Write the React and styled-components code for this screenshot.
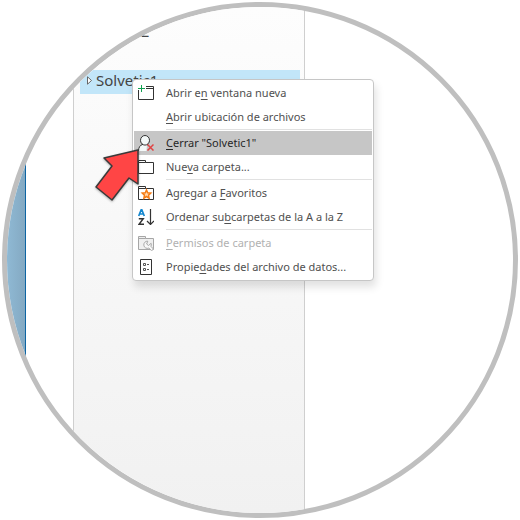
import React from "react";
import styled, { createGlobalStyle } from "styled-components";

const GlobalStyle = createGlobalStyle`
  * {
    box-sizing: border-box;
  }

  body {
    margin: 0;
    background: #fff;
    font-family: "Noto Sans", "Open Sans", sans-serif;
    color: #444;
  }
`;

const Page = styled.main`
  padding: 2px;
`;

const Lens = styled.div`
  display: grid;
  grid-template-columns: 19px 47px 232px 1fr;
  width: 100%;
  aspect-ratio: 1;
  border: 5px solid #bfbfbf;
  border-radius: 50%;
  background: #fff;
  overflow: hidden;
`;

const Rail = styled.div`
  background: linear-gradient(90deg, #8fb9d4, #84a9c2);
  border-right: 1px solid #0e65a3;
`;

const FolderPane = styled.nav`
  grid-column: 3;
  display: flex;
  flex-direction: column;
  gap: 25px;
  padding: 14px 4px 0 6px;
  border-left: 1px solid #cfcfcf;
  border-right: 1px solid #cfcfcf;
  background: linear-gradient(#fdfdfd, #f1f1f1);
`;

const Folder = styled.button`
  display: flex;
  align-items: center;
  gap: 4px;
  height: 24px;
  padding: 0 7px 4px;
  border: 0;
  background: ${({ $selected }) => ($selected ? "#c2e6f9" : "transparent")};
  color: #444;
  font: inherit;
  font-size: 15px;
  line-height: 20px;
  text-align: left;
`;

const FolderItem = styled.div`
  position: relative;
  display: grid;
`;

const Menu = styled.div`
  position: absolute;
  top: 9px;
  left: 52px;
  width: 242px;
  padding: 1px;
  border: 1px solid #c6c6c6;
  border-radius: 4px;
  background: #fff;
  box-shadow: 2px 6px 9px rgba(0, 0, 0, 0.12);
`;

const MenuItem = styled.button`
  display: flex;
  align-items: center;
  gap: 12px;
  width: 100%;
  height: 24px;
  padding: 0 4px;
  border: 0;
  background: ${({ $active }) => ($active ? "#c6c6c6" : "transparent")};
  color: ${({ $active }) => ($active ? "#262626" : "#505050")};
  font: inherit;
  font-size: 11px;
  line-height: 16px;
  white-space: nowrap;
  text-align: left;

  &:disabled {
    color: #b1b1b1;
  }

  u {
    text-underline-offset: 2px;
  }
`;

const Separator = styled.hr`
  height: 2px;
  margin: 0 0 0 32px;
  border: 0;
  border-top: 1px solid #e1e1e1;
`;

const Icon = styled.svg`
  flex: none;
  width: 16px;
  height: 16px;
  fill: none;
  stroke: #333;
`;

const Pointer = styled.svg`
  position: absolute;
  top: 76px;
  left: 12px;
  width: 50px;
  height: 58px;
  filter: drop-shadow(0 1px 1px rgba(0, 0, 0, 0.3));
`;

const NewWindowIcon = () => (
  <Icon viewBox="0 0 16 16">
    <path d="M.5 5v9.500h15v-13H8M8 3.500h7.500" />
    <path d="M0 3.500h7M3.500 0v7" stroke="#10a050" />
  </Icon>
);

const CloseIcon = () => (
  <Icon viewBox="0 0 16 16">
    <path
      d="M.5 16C.5 12.500 2 10 5 9.300a4.500 4.800 0 1 1 4 0L8.500 16z"
      fill="#f4f9f9"
      stroke="none"
    />
    <path d="M.5 16C.5 12.500 2 10 5 9.300M9 9.300l1 .7" />
    <ellipse cx="7" cy="5.300" rx="4.500" ry="4.800" />
    <path d="M9.500 9.500l6 6M15.500 9.500l-6 6" stroke="#e04343" strokeWidth="1.500" />
  </Icon>
);

const FolderIcon = () => (
  <Icon viewBox="0 0 16 16">
    <path d="M.5 1.500h7v2h8v11H.5zM.5 3.500h7" />
  </Icon>
);

const FavoriteIcon = () => (
  <Icon viewBox="0 0 16 16">
    <path d="M.5 1.500h7v2h8v11H.5zM.5 3.500h7" />
    <path
      d="M8.500 5l1.200 2.800 3 .3-2.200 2 .6 3-2.600-1.600-2.600 1.600.6-3-2.200-2 3-.3z"
      fill="#ffd9b0"
      stroke="#f57c14"
      strokeWidth="1.500"
    />
  </Icon>
);

const SortIcon = () => (
  <Icon viewBox="0 0 16 16">
    <path d="M.7 7L3.200.8h.6L6.300 7M1.600 5h3.800" stroke="#1487cf" strokeWidth="1.700" />
    <path d="M.8 9.700h4.400L1 15.300h5" strokeWidth="1.500" />
    <path d="M12.500 0v15.500M9 12l3.500 3.500L16 12" strokeWidth="1.200" />
  </Icon>
);

const PermissionsIcon = () => (
  <Icon viewBox="0 0 16 16">
    <path d="M.5 1.500h7v2h8v11H.5zM.5 3.500h7" fill="#efefef" stroke="#a6a6a6" />
    <path
      d="M9.800 6.200a3.600 3.600 0 1 0 1 6.900L13.600 15.700l1.900-1.600-2.600-2.800a3.600 3.600 0 0 0 .2-3L10.500 10.500 8.600 9z"
      fill="#f8f8f8"
      stroke="#a6a6a6"
      strokeLinejoin="round"
    />
  </Icon>
);

const PropertiesIcon = () => (
  <Icon viewBox="0 0 16 16">
    <path d="M2.500.5h11v15h-11z" />
    <path d="M5.500 4.500h2v2h-2zM5.500 9.500h2v2h-2zM9 5.500h2M9 10.500h2" stroke="#555" />
  </Icon>
);

const App = () => (
  <Page>
    <GlobalStyle />
    <Lens>
      <Rail />
      <FolderPane>
        <Folder>Solvetic2</Folder>
        <FolderItem>
          <Folder $selected>
            <svg width="5" height="9" viewBox="0 0 5 9">
              <path d="M.5.8v7.400l4-3.700z" fill="#fff" stroke="#666" />
            </svg>
            Solvetic1
          </Folder>
          <Menu role="menu">
            <MenuItem role="menuitem">
              <NewWindowIcon />
              <span>
                Abrir e<u>n</u> ventana nueva
              </span>
            </MenuItem>
            <MenuItem role="menuitem">
              <Icon />
              <span>
                <u>A</u>brir ubicación de archivos
              </span>
            </MenuItem>
            <Separator />
            <MenuItem role="menuitem" $active>
              <CloseIcon />
              <span>
                <u>C</u>errar "Solvetic1"
              </span>
            </MenuItem>
            <MenuItem role="menuitem">
              <FolderIcon />
              <span>
                Nue<u>v</u>a carpeta...
              </span>
            </MenuItem>
            <Separator />
            <MenuItem role="menuitem">
              <FavoriteIcon />
              <span>
                Agregar a <u>F</u>avoritos
              </span>
            </MenuItem>
            <MenuItem role="menuitem">
              <SortIcon />
              <span>
                Ordenar su<u>b</u>carpetas de la A a la Z
              </span>
            </MenuItem>
            <Separator />
            <MenuItem role="menuitem" disabled>
              <PermissionsIcon />
              <span>
                <u>P</u>ermisos de carpeta
              </span>
            </MenuItem>
            <MenuItem role="menuitem">
              <PropertiesIcon />
              <span>
                Propie<u>d</u>ades del archivo de datos...
              </span>
            </MenuItem>
          </Menu>
          <Pointer viewBox="0 0 50 58">
            <path
              d="M46 4v34l-9-6-17 22L4 41l16-21-8-8z"
              fill="#ff4545"
              stroke="#3a3a3a"
              strokeWidth="1.500"
              strokeLinejoin="round"
            />
          </Pointer>
        </FolderItem>
      </FolderPane>
    </Lens>
  </Page>
);

export default App;
